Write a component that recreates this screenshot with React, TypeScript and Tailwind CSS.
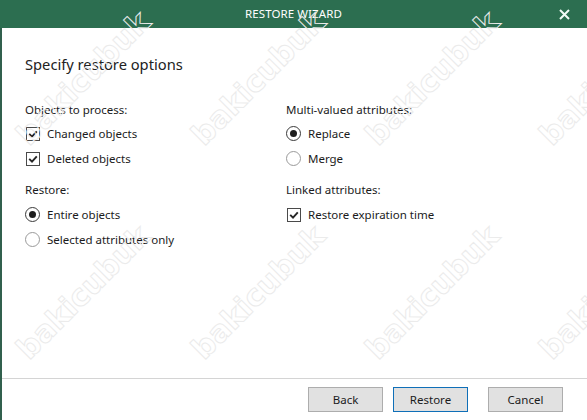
import React from "react";

function Check() {
  return (
    <span className="w-[14px] h-[14px] border border-[#4a4a4a] bg-white flex items-center justify-center shrink-0 ml-[1px]">
      <svg width="10" height="8" viewBox="0 0 10 8">
        <path d="M1.2 3.8 L4 6.6 L8.8 1.4" stroke="#262626" strokeWidth="1.9" fill="none" />
      </svg>
    </span>
  );
}

function Radio({ on }: { on?: boolean }) {
  return (
    <span
      className={
        on
          ? "w-[15px] h-[15px] rounded-full border border-[#3a3a3a] bg-white flex items-center justify-center shrink-0"
          : "w-[15px] h-[15px] rounded-full border border-[#9a9a9a] bg-white flex items-center justify-center shrink-0"
      }
    >
      {on && <span className="w-[7px] h-[7px] rounded-full bg-[#1e1e1e]" />}
    </span>
  );
}

function Row({ children, label }: { children: React.ReactNode; label: string }) {
  return (
    <div className="h-[25px] flex items-center gap-[7px]">
      {children}
      <span>{label}</span>
    </div>
  );
}

function Label({ text }: { text: string }) {
  return <div className="h-[20px] flex items-center mb-[1px]">{text}</div>;
}

const wm =
  "absolute -translate-x-1/2 -translate-y-1/2 rotate-[-45deg] whitespace-nowrap text-[30px] font-bold text-transparent [-webkit-text-stroke:1px_#ebebeb] font-['DejaVu_Sans',sans-serif]";

export default function App() {
  return (
    <div className="w-[587px] h-[420px] relative overflow-hidden bg-white flex flex-col text-[#1b1b1b] font-['Noto_Sans',sans-serif] text-[11.5px]">
      <div className="h-[28px] shrink-0 bg-[#2c6e50] relative flex items-center justify-center">
        <span className="text-white text-[11.5px] tracking-[0.1px]">RESTORE WIZARD</span>
        <svg className="absolute right-[17px] top-[9px]" width="11" height="11" viewBox="0 0 11 11">
          <path d="M1 1 L10 10 M10 1 L1 10" stroke="#f2fbf6" strokeWidth="2" />
        </svg>
      </div>
      <div className="flex-1 flex flex-col border-l-2 border-[#31604d]">
        <div className="flex-1 pl-[23px] pt-[26px]">
          <div className="h-[20px] flex items-center text-[14.7px] text-[#222]">Specify restore options</div>
          <div className="mt-[26px] grid grid-cols-[261px_1fr]">
            <div className="flex flex-col">
              <Label text="Objects to process:" />
              <Row label="Changed objects"><Check /></Row>
              <Row label="Deleted objects"><Check /></Row>
              <div className="mt-[9px] mb-[1px]">
                <Label text="Restore:" />
              </div>
              <Row label="Entire objects"><Radio on /></Row>
              <Row label="Selected attributes only"><Radio /></Row>
            </div>
            <div className="flex flex-col">
              <Label text="Multi-valued attributes:" />
              <Row label="Replace"><Radio on /></Row>
              <Row label="Merge"><Radio /></Row>
              <div className="mt-[9px] mb-[1px]">
                <Label text="Linked attributes:" />
              </div>
              <Row label="Restore expiration time"><Check /></Row>
            </div>
          </div>
        </div>
        <div className="h-[42px] shrink-0 border-t border-[#d4d4d4] flex justify-end items-start pt-[8px] pr-[24px]">
          <button className="w-[75px] h-[25px] bg-[#e1e1e1] border border-[#adadad] text-[#1b1b1b] flex items-center justify-center">Back</button>
          <button className="ml-[10px] w-[75px] h-[25px] bg-[#e1e1e1] border border-[#0f6fb8] text-[#1b1b1b] flex items-center justify-center">Restore</button>
          <button className="ml-[20px] w-[75px] h-[25px] bg-[#e1e1e1] border border-[#adadad] text-[#1b1b1b] flex items-center justify-center">Cancel</button>
        </div>
      </div>
      <div className="absolute inset-0 pointer-events-none">
        <span className={wm + " left-[83px] top-[78px]"}>bakicubuk</span>
        <span className={wm + " left-[258px] top-[78px]"}>bakicubuk</span>
        <span className={wm + " left-[432px] top-[78px]"}>bakicubuk</span>
        <span className={wm + " left-[606px] top-[78px]"}>bakicubuk</span>
        <span className={wm + " left-[83px] top-[292px]"}>bakicubuk</span>
        <span className={wm + " left-[258px] top-[292px]"}>bakicubuk</span>
        <span className={wm + " left-[432px] top-[292px]"}>bakicubuk</span>
        <span className={wm + " left-[606px] top-[292px]"}>bakicubuk</span>
      </div>
    </div>
  );
}
